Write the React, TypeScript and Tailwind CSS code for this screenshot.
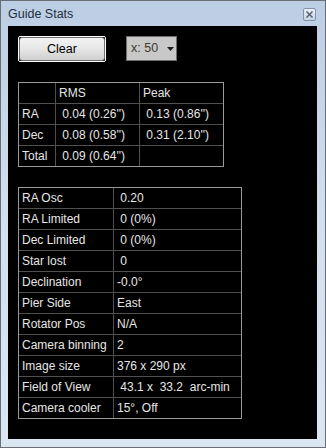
import React from 'react';

const font = { fontFamily: '"Liberation Sans", Arial, sans-serif' };

const errorRows: [string, string, string][] = [
  ['RA', ' 0.04 (0.26\'\')', ' 0.13 (0.86\'\')'],
  ['Dec', ' 0.08 (0.58\'\')', ' 0.31 (2.10\'\')'],
  ['Total', ' 0.09 (0.64\'\')', ''],
];

const infoRows: [string, string][] = [
  ['RA Osc', ' 0.20'],
  ['RA Limited', ' 0 (0%)'],
  ['Dec Limited', ' 0 (0%)'],
  ['Star lost', ' 0'],
  ['Declination', '-0.0°'],
  ['Pier Side', 'East'],
  ['Rotator Pos', 'N/A'],
  ['Camera binning', '2'],
  ['Image size', '376 x 290 px'],
  ['Field of View', ' 43.1 x  33.2  arc-min'],
  ['Camera cooler', '15°, Off'],
];

function CloseButton() {
  return (
    <div className="w-[13px] h-[13px] rounded-[2px] border border-[#8593a8] bg-gradient-to-b from-[#e9eff7] to-[#c6d3e4] flex items-center justify-center">
      <svg width="7" height="7" viewBox="0 0 7 7">
        <path d="M1 1 L6 6 M6 1 L1 6" stroke="#566173" strokeWidth="1.5" strokeLinecap="square" />
      </svg>
    </div>
  );
}

export default function App() {
  return (
    <div
      style={font}
      className="w-[326px] h-[448px] border border-[#6b6f75] bg-gradient-to-b from-[#bccee3] via-[#d3e0ef] to-[#dbe6f3] flex flex-col"
    >
      {/* Title bar */}
      <div className="h-[25px] flex items-center justify-between pl-[7px] pr-[9px] pt-[1px]">
        <span className="text-[12.5px] text-[#24303f] leading-none">Guide Stats</span>
        <CloseButton />
      </div>

      {/* Client area */}
      <div className="ml-[7px] w-[309px] h-[413px] bg-black text-[#e6e6e6] text-[12px] pl-[10px] pt-[10px]">
        <div className="flex items-start">
          <div className="w-[88px] h-[26px] border border-white rounded-[2px]">
            <button className="w-full h-full rounded-[3px] border border-[#707070] bg-gradient-to-b from-[#f3f3f3] via-[#e6e6e6] to-[#cfcfcf] text-black text-[12.5px] flex items-center justify-center">
              Clear
            </button>
          </div>
          <div className="ml-[20px] w-[51px] h-[25px] border border-[#6e6e6e] bg-[#c8c8c8] flex items-center pl-[4px] gap-[9px]">
            <span className="text-[#3f3a30] text-[12.5px]">x: 50</span>
            <svg width="7" height="4" viewBox="0 0 7 4">
              <path d="M0 0 H7 L3.5 4 Z" fill="#1c1c1c" />
            </svg>
          </div>
        </div>

        {/* Guide error table */}
        <div className="mt-[20px] w-[206px] border border-[#9a9a9a]">
          <div className="flex h-[20px]">
            <div className="w-[36px]" />
            <div className="w-[84px] border-l border-[#505050] pl-[3px] flex items-center">RMS</div>
            <div className="w-[84px] border-l border-[#505050] pl-[3px] flex items-center">Peak</div>
          </div>
          {errorRows.map(([label, rms, peak]) => (
            <div key={label} className="flex h-[21px] border-t border-[#505050]">
              <div className="w-[36px] pl-[3px] flex items-center">{label}</div>
              <div className="w-[84px] border-l border-[#505050] pl-[3px] flex items-center whitespace-pre">{rms}</div>
              <div className="w-[84px] border-l border-[#505050] pl-[3px] flex items-center whitespace-pre">{peak}</div>
            </div>
          ))}
        </div>

        {/* Info table */}
        <div className="mt-[20px] w-[224px] border border-[#9a9a9a]">
          {infoRows.map(([label, value], i) => (
            <div key={label} className={`flex ${i === 0 ? 'h-[20px]' : 'h-[21px] border-t border-[#505050]'}`}>
              <div className="w-[94px] pl-[3px] flex items-center whitespace-nowrap">{label}</div>
              <div className="w-[128px] border-l border-[#505050] pl-[3px] flex items-center whitespace-pre">{value}</div>
            </div>
          ))}
        </div>
      </div>
    </div>
  );
}
